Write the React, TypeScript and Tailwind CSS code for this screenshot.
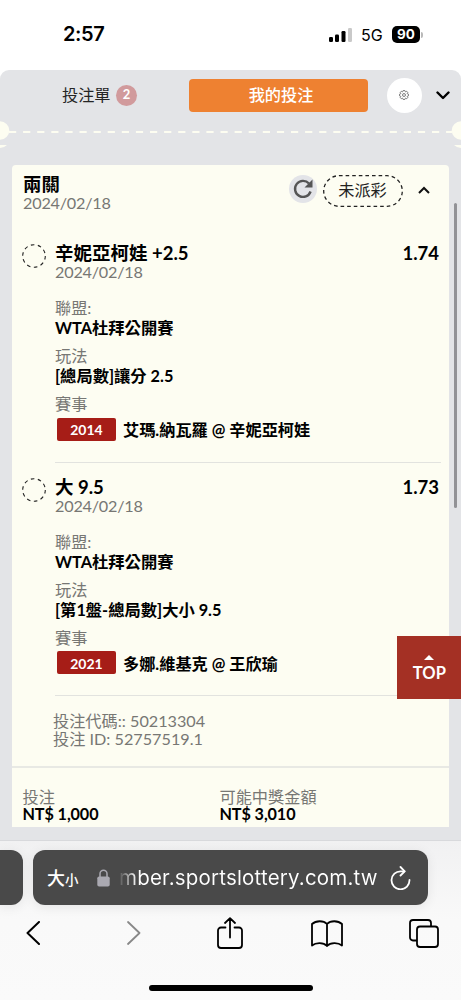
import React from "react";

type Leg = {
  pick: string;
  odds: string;
  market: string;
  code: string;
  match: string;
};

const legs: Leg[] = [
  { pick: "辛妮亞柯娃 +2.5", odds: "1.74", market: "[總局數]讓分 2.5", code: "2014", match: "艾瑪.納瓦羅 @ 辛妮亞柯娃" },
  { pick: "大 9.5", odds: "1.73", market: "[第1盤-總局數]大小 9.5", code: "2021", match: "多娜.維基克 @ 王欣瑜" },
];

function StatusBar() {
  return (
    <header className="flex h-[70px] shrink-0 items-start bg-white pl-[63px] pr-[38px] pt-[22px] font-['Inter']">
      <div className="h-[25px] text-[20px] leading-[25px] font-semibold tracking-[-0.4px] text-black">2:57</div>
      <div className="ml-auto flex h-[25px] items-center">
        <svg width="24" height="16" viewBox="0 0 24 16" className="mr-[8px]">
          <rect x="0" y="10" width="4" height="5" rx="1.2" />
          <rect x="6" y="7.5" width="4" height="7.5" rx="1.2" />
          <rect x="12.5" y="4" width="4" height="11" rx="1.2" />
          <rect x="19" y="1" width="4" height="14" rx="1.2" fill="#c9c9c9" />
        </svg>
        <span className="w-[31px] text-[16px] text-black">5G</span>
        <div className="flex h-[17px] w-[28px] items-center justify-center rounded-[5px] bg-black text-[13.5px] font-bold text-white">90</div>
        <div className="ml-px h-[6px] w-[2px] rounded-r-full bg-[#b9b9b9]" />
      </div>
    </header>
  );
}

function Field({ label, value }: { label: string; value: string }) {
  return (
    <div className="mb-[7px]">
      <div className="h-[20px] leading-[20px] text-[#777774]">{label}</div>
      <div className="h-[21px] text-[16.3px] leading-[19px] font-bold text-black">{value}</div>
    </div>
  );
}

function LegRow({ leg }: { leg: Leg }) {
  return (
    <section className="flex h-[233.5px] pl-[10px]">
      <svg width="24" height="24" viewBox="0 0 24 24" className="mt-[15px] shrink-0" fill="none">
        <circle cx="12" cy="12" r="11.3" stroke="#222" strokeWidth="1.1" strokeDasharray="3.6 3.5" />
      </svg>
      <div className="ml-[9px] mr-[8px] flex grow flex-col border-b border-[#e2e3df] pt-[14px]">
        <div className="flex h-[20px] justify-between pr-[2px] text-[18.5px] leading-[20px] font-bold text-black">
          <span>{leg.pick}</span>
          <span>{leg.odds}</span>
        </div>
        <div className="mb-[17px] h-[18px] leading-[18px] tracking-[-0.2px] text-[#777774]">2024/02/18</div>
        <Field label="聯盟:" value="WTA杜拜公開賽" />
        <Field label="玩法" value={leg.market} />
        <div className="h-[22px] leading-[20px] text-[#777774]">賽事</div>
        <div className="flex items-center pl-[2px] font-bold">
          <span className="mr-[7px] flex h-[23px] w-[59px] items-center justify-center rounded-[2px] bg-[#a61d17] pt-px text-[14px] text-white">{leg.code}</span>
          <span className="pt-[2px] text-black">{leg.match}</span>
        </div>
      </div>
    </section>
  );
}

function Tabs() {
  return (
    <div className="flex h-[50px] items-center pl-[62px] pr-[11px]">
      <span className="text-[#252525]">投注單</span>
      <span className="ml-[5.5px] flex size-[21px] items-center justify-center rounded-full bg-[#d19a9c] text-[13px] font-bold text-white">2</span>
      <button className="ml-[51.5px] h-[33px] w-[179px] rounded-[4px] bg-[#ee8131] pl-[6px] font-medium text-white">我的投注</button>
      <span className="ml-[19px] flex size-[35px] items-center justify-center rounded-full bg-white">
        <svg width="10" height="10" viewBox="0 0 20 22" fill="none" stroke="#555" strokeWidth="1.7">
          <path d="M8.3 1h3.4l.6 2.3 1.500.6 2-1.200 2.500 2.500-1.200 2 .6 1.500 2.300.6v3.400l-2.300.6-.6 1.500 1.200 2-2.500 2.500-2-1.200-1.500.6-.6 2.300H8.300l-.6-2.300-1.500-.6-2 1.200-2.500-2.500 1.200-2-.6-1.500L0 12.700V9.300l2.300-.6.6-1.500-1.200-2 2.500-2.500 2 1.200 1.500-.6z" strokeLinejoin="round" />
          <circle cx="10" cy="11" r="3.2" />
        </svg>
      </span>
      <svg width="14" height="9" viewBox="0 0 14 9" className="ml-auto" fill="none" stroke="#000" strokeWidth="2.4" strokeLinecap="round" strokeLinejoin="round">
        <path d="m1.5 1.5 5.5 5.5 5.5-5.5" />
      </svg>
    </div>
  );
}

function BrowserBar() {
  return (
    <footer className="h-[160px] shrink-0 overflow-hidden border-t border-[#d8d9dc] bg-gradient-to-b from-[#f1f1f2] via-[#f9f9f9] via-50% to-[#fafafa]">
      <div className="flex pt-[9px]">
        <div className="h-[55px] w-[23px] rounded-r-[12px] bg-[#494949] shadow-[0_2px_12px_rgba(0,0,0,0.08)]" />
        <div className="ml-[10px] flex h-[55px] w-[395px] items-center rounded-[12px] bg-[#494949] pl-[14px] text-white shadow-[0_2px_12px_rgba(0,0,0,0.08)]">
          <span className="w-[50px] font-['Noto_Sans_CJK_TC'] font-medium whitespace-nowrap">
            <span className="text-[18px]">大</span>
            <span className="text-[13.5px]">小</span>
          </span>
          <svg width="13" height="18" viewBox="0 0 13 18" fill="none">
            <rect x="0.3" y="7.5" width="12.4" height="10" rx="1.8" fill="#aaa9b1" />
            <path d="M3 8V4.8a3.5 3.5 0 0 1 7 0V8" stroke="#aaa9b1" strokeWidth="1.5" />
          </svg>
          <span className="ml-[9px] w-[260px] bg-gradient-to-r from-[#555] to-white to-[18px] bg-clip-text font-['Inter'] text-[20.5px] leading-[28px] tracking-[0.19px] whitespace-nowrap text-transparent">mber.sportslottery.com.tw</span>
          <svg width="21" height="24" viewBox="0 0 21 24" className="ml-[11px]" fill="none" stroke="white" strokeWidth="1.8" strokeLinecap="round" strokeLinejoin="round">
            <path d="M14.5 5.3H11A9 9 0 1 0 19.5 14" />
            <path d="m10.5 1 4.2 4.3-4.2 4.2" />
          </svg>
        </div>
      </div>
      <nav className="flex h-[56px] items-center pl-[26px] pr-[22px]">
        <svg width="14" height="24" viewBox="0 0 14 24" fill="none" stroke="#000" strokeWidth="2" strokeLinecap="round" strokeLinejoin="round">
          <path d="M13 1 1.5 12 13 23" />
        </svg>
        <svg width="14" height="24" viewBox="0 0 14 24" className="ml-[87px]" fill="none" stroke="#888" strokeWidth="1.8" strokeLinecap="round" strokeLinejoin="round">
          <path d="m1 1 11.5 11L1 23" />
        </svg>
        <svg width="26" height="32" viewBox="0 0 26 32" className="ml-[75.5px]" fill="none" stroke="#000" strokeWidth="1.8" strokeLinecap="round" strokeLinejoin="round">
          <path d="M8.5 10.5H4a3 3 0 0 0-3 3V28a3 3 0 0 0 3 3h18a3 3 0 0 0 3-3V13.5a3 3 0 0 0-3-3h-4.5M13 20.5V1.5M8 6l5-4.8L18 6" />
        </svg>
        <svg width="32" height="27" viewBox="0 0 32 27" className="ml-[68px]" fill="none" stroke="#000" strokeWidth="1.8" strokeLinecap="round" strokeLinejoin="round">
          <path d="M16 4C12.5.3 5 .3 1 4v21.5c4-3.3 11.5-3.3 15 .5 3.5-3.8 11-3.8 15-.5V4C27 .3 19.5.3 16 4ZM16 4v22" />
        </svg>
        <svg width="30" height="29" viewBox="0 0 30 29" className="ml-auto" fill="none" stroke="#000" strokeWidth="1.8">
          <path d="M8 21.5H4a3 3 0 0 1-3-3V4a3 3 0 0 1 3-3h15a3 3 0 0 1 3 3v3.5" />
          <rect x="8" y="7.5" width="21" height="20.5" rx="3" />
        </svg>
      </nav>
      <div className="mx-auto mt-[24px] h-[6px] w-[164px] rounded-full bg-black" />
    </footer>
  );
}

export default function App() {
  return (
    <div className="relative flex h-[1000px] w-[461px] flex-col overflow-hidden bg-white font-['Lato','Noto_Sans_CJK_TC',sans-serif] text-[16.2px]">
      <StatusBar />
      <main className="h-[770px] grow overflow-hidden rounded-t-[9px] bg-[#e3e4e7]">
        <Tabs />
        <svg width="461" height="32" viewBox="0 0 461 32" className="block" fill="#fdfdf1">
          <path d="M9 12H452" stroke="#fdfdf1" strokeWidth="2" strokeDasharray="7.2 6.9" />
          <circle cx="0" cy="10.5" r="9.3" />
          <circle cx="461" cy="10.5" r="9.3" />
          <path d="M0 25h7q-3 3-7 3zM461 25h-7q3 3 7 3z" />
        </svg>
        <article className="ml-[12px] mt-[13px] h-[662px] w-[437px] rounded-t-[4px] bg-[#fdfdf2]">
          <div className="flex h-[64px] pl-[11px] pt-[9px]">
            <div>
              <div className="h-[20px] text-[18.4px] leading-[20px] font-bold text-black">兩關</div>
              <div className="h-[18px] leading-[18px] tracking-[-0.2px] text-[#777774]">2024/02/18</div>
            </div>
            <div className="ml-auto flex h-[33px] items-center pr-[19.5px]">
              <span className="mb-[3px] flex size-[28px] items-center justify-center rounded-full bg-[#e3e4e8]">
                <svg width="20" height="20" viewBox="0 0 20 20" fill="none">
                  <path d="M16 4.5A8 8 0 1 0 17.6 12.5" stroke="#555" strokeWidth="2.4" />
                  <path d="M19.5.5V8.5H11.5Z" fill="#555" />
                </svg>
              </span>
              <div className="ml-[6px] grid h-[32px] w-[80px] place-items-center">
                <svg width="80" height="32" viewBox="0 0 80 32" className="col-start-1 row-start-1" fill="none">
                  <rect x="0.7" y="0.7" width="78.6" height="30.6" rx="15.3" stroke="#222" strokeWidth="1.3" strokeDasharray="3.6 3" />
                </svg>
                <span className="col-start-1 row-start-1 text-[#222]">未派彩</span>
              </div>
              <svg width="12" height="8" viewBox="0 0 12 8" className="mb-[2px] ml-[15px]" fill="none" stroke="#111" strokeWidth="2">
                <path d="M1 7 6 2l5 5" />
              </svg>
            </div>
          </div>
          {legs.map((leg) => (
            <LegRow key={leg.code} leg={leg} />
          ))}
          <div className="flex h-[72px] flex-col border-b-2 border-[#e8e9e4] pl-[41px] pt-[15.5px] leading-[18px] text-[#777774]">
            <span>投注代碼:: 50213304</span>
            <span>投注 ID: 52757519.1</span>
          </div>
          <div className="flex pl-[10.5px] pt-[20px] leading-[18px]">
            <div className="w-[197px]">
              <div className="text-[#777774]">投注</div>
              <div className="-mt-px tracking-[-0.1px] font-bold text-black">NT$ 1,000</div>
            </div>
            <div>
              <div className="text-[#777774]">可能中獎金額</div>
              <div className="-mt-px tracking-[-0.1px] font-bold text-black">NT$ 3,010</div>
            </div>
          </div>
        </article>
      </main>
      <BrowserBar />
      <div className="absolute left-[454px] top-[203px] h-[305px] w-[3px] rounded-full bg-[#929296]" />
      <button className="absolute left-[397.4px] top-[636.4px] flex h-[63px] w-[64px] flex-col items-center bg-[#a43024] pt-[18.5px] text-[16.5px] leading-[22px] font-bold text-white">
        <svg width="10" height="5" viewBox="0 0 10 5" fill="white">
          <path d="m5 0 5 5H0Z" />
        </svg>
        <span className="mt-[2px]">TOP</span>
      </button>
    </div>
  );
}
